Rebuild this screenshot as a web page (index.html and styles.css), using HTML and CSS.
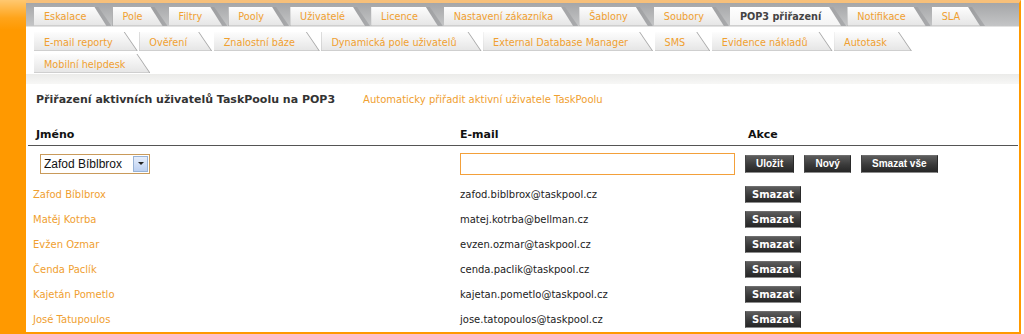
FILE: index.html
```
<!DOCTYPE html>
<html>
<head>
    <title>POP3 přiřazení</title>
    <meta charset="UTF-8">
    <meta name="viewport" content="width=device-width, initial-scale=1.0">
    <link rel="stylesheet" href="styles.css">
</head>
<body>
    <div class="page">
        <div class="side"></div>
        <div class="main">
            <!-- Záložky nastavení -->
            <ul class="tabs first">
                <li><a href="#">Eskalace</a></li>
                <li><a href="#">Pole</a></li>
                <li><a href="#">Filtry</a></li>
                <li><a href="#">Pooly</a></li>
                <li><a href="#">Uživatelé</a></li>
                <li><a href="#">Licence</a></li>
                <li><a href="#">Nastavení zákazníka</a></li>
                <li><a href="#">Šablony</a></li>
                <li><a href="#">Soubory</a></li>
                <li class="active"><a href="#">POP3 přiřazení</a></li>
                <li><a href="#">Notifikace</a></li>
                <li><a href="#">SLA</a></li>
            </ul>
            <ul class="tabs second">
                <li><a href="#">E-mail reporty</a></li>
                <li><a href="#">Ověření</a></li>
                <li><a href="#">Znalostní báze</a></li>
                <li><a href="#">Dynamická pole uživatelů</a></li>
                <li><a href="#">External Database Manager</a></li>
                <li><a href="#">SMS</a></li>
                <li><a href="#">Evidence nákladů</a></li>
                <li><a href="#">Autotask</a></li>
            </ul>
            <ul class="tabs">
                <li><a href="#">Mobilní helpdesk</a></li>
            </ul>
            <div class="band"></div>

            <div class="intro">
                <h2>Přiřazení aktivních uživatelů TaskPoolu na POP3</h2>
                <a href="#" class="link">Automaticky přiřadit aktivní uživatele TaskPoolu</a>
            </div>

            <table class="list">
                <thead>
                    <tr>
                        <th class="col-name">Jméno</th>
                        <th class="col-mail">E-mail</th>
                        <th>Akce</th>
                    </tr>
                </thead>
                <tbody>
                    <tr class="edit">
                        <td>
                            <span class="select">
                                <select name="uzivatel">
                                    <option>Zafod Bíblbrox</option>
                                </select>
                                <span class="arrow"></span>
                            </span>
                        </td>
                        <td><input type="text" name="email" class="mail"></td>
                        <td>
                            <button class="btn">Uložit</button>
                            <button class="btn">Nový</button>
                            <button class="btn">Smazat vše</button>
                        </td>
                    </tr>
                    <tr>
                        <td><a href="#">Zafod Bíblbrox</a></td>
                        <td>zafod.biblbrox@taskpool.cz</td>
                        <td><button class="btn small">Smazat</button></td>
                    </tr>
                    <tr>
                        <td><a href="#">Matěj Kotrba</a></td>
                        <td>matej.kotrba@bellman.cz</td>
                        <td><button class="btn small">Smazat</button></td>
                    </tr>
                    <tr>
                        <td><a href="#">Evžen Ozmar</a></td>
                        <td>evzen.ozmar@taskpool.cz</td>
                        <td><button class="btn small">Smazat</button></td>
                    </tr>
                    <tr>
                        <td><a href="#">Čenda Paclík</a></td>
                        <td>cenda.paclik@taskpool.cz</td>
                        <td><button class="btn small">Smazat</button></td>
                    </tr>
                    <tr>
                        <td><a href="#">Kajetán Pometlo</a></td>
                        <td>kajetan.pometlo@taskpool.cz</td>
                        <td><button class="btn small">Smazat</button></td>
                    </tr>
                    <tr>
                        <td><a href="#">José Tatupoulos</a></td>
                        <td>jose.tatopoulos@taskpool.cz</td>
                        <td><button class="btn small">Smazat</button></td>
                    </tr>
                </tbody>
            </table>
        </div>
    </div>
</body>
</html>
```
FILE: styles.css
```
body {
    font-family: "DejaVu Sans", Verdana, sans-serif;
    font-size: 10px;
    background-color: #fff;
    color: #222;
    margin: 0;
    padding: 0;
}

a {
    color: #f0a030;
    text-decoration: none;
}

.page {
    display: flex;
    height: 334px;
}

.side {
    width: 26px;
    flex-shrink: 0;
    background: linear-gradient(#ffc870 0, #ffa41a 18px, #ff9900 30px);
}

.main {
    width: 995px;
    box-sizing: border-box;
    border-top: 3px solid #f7c07a;
    border-right: 2px solid #ff9900;
    border-bottom: 2px solid #ff9900;
    background-color: #fff;
}

/* zalozky */
.tabs {
    list-style: none;
    margin: 3px 0 0 0;
    padding: 0 0 0 8px;
    display: flex;
    height: 19px;
    font-size: 9.7px;
}

.tabs.first {
    margin-top: 0;
    height: 24px;
    padding-top: 4px;
    box-sizing: border-box;
    background: linear-gradient(#a5a6a8, #c4c5c6);
    border-bottom: 1px solid #e2e2e2;
}

.tabs.second {
    margin-top: 5px;
}

.tabs li {
    margin-right: 1.5px;
    background: #a8a8a8;
    clip-path: polygon(0 0, calc(100% - 13px) 0, 100% 100%, 0 100%);
}

.tabs.first li {
    margin-right: 1px;
    background: linear-gradient(to right, #7e7f81, #a9aaac);
}

.tabs a {
    display: block;
    height: 19px;
    line-height: 19px;
    padding: 1px 25px 0 10px;
    box-sizing: border-box;
    background: linear-gradient(#fdfdfd, #e6e6e6);
    border-bottom: 1px solid #cfcfcf;
    clip-path: polygon(0 0, calc(100% - 14px) 0, calc(100% - 1px) 100%, 0 100%);
}

.tabs.first a {
    line-height: 18px;
    clip-path: polygon(0 0, calc(100% - 17px) 0, calc(100% - 5px) 100%, 0 100%);
}

.tabs .active a {
    color: #444;
    font-weight: bold;
    background: linear-gradient(#fff, #f4f4f4);
}

.band {
    height: 10px;
    margin-top: 1px;
    background: linear-gradient(#ebebe9, #f7f7f6);
}

/* nadpis */
.intro {
    display: flex;
    align-items: center;
    padding: 8px 0 0 10px;
    height: 14px;
    margin-bottom: 18px;
}

.intro h2 {
    font-size: 11px;
    margin: 0 28px 0 0;
    color: #333;
}

/* tabulka */
.list {
    border-collapse: collapse;
    margin-left: 2px;
    width: 990px;
}

.list th {
    text-align: left;
    font-size: 11px;
    font-weight: bold;
    color: #111;
    height: 21px;
    padding: 0 0 0 8px;
    border-bottom: 1px solid #555;
}

.list .col-name {
    width: 419px;
}

.list .col-mail {
    width: 280px;
    padding-left: 5px;
}

.list td {
    height: 25px;
    padding: 0 0 0 5px;
    vertical-align: middle;
}

.list .edit td {
    height: 35px;
    padding-bottom: 1px;
}

.select {
    display: inline-flex;
    margin-left: 7px;
    width: 110px;
    height: 20px;
    box-sizing: border-box;
    border: 1px solid #c99a5a;
    background-color: #fff;
}

.select select {
    appearance: none;
    -webkit-appearance: none;
    border: none;
    background: transparent;
    flex: 1;
    min-width: 0;
    padding: 0 0 0 3px;
    font-family: "Liberation Sans", Arial, sans-serif;
    font-size: 12px;
    color: #111;
    outline: none;
}

.select .arrow {
    width: 15px;
    margin: 1px;
    box-sizing: border-box;
    border: 1px solid #98b3d6;
    background: linear-gradient(#e6eefc, #bcd0f1);
    display: flex;
    align-items: center;
    justify-content: center;
}

.select .arrow::after {
    content: "";
    border-left: 3px solid transparent;
    border-right: 3px solid transparent;
    border-top: 3px solid #222;
}

.mail {
    width: 275px;
    height: 22px;
    box-sizing: border-box;
    border: 1px solid #f3a03a;
    margin: 0;
    padding: 2px;
}

.btn {
    font-family: "Liberation Sans", Arial, sans-serif;
    font-size: 10px;
    font-weight: bold;
    color: #fff;
    height: 18px;
    padding: 0 10px;
    margin: 0 7px 0 0;
    border: 1px solid;
    border-color: #6e6e6e #2a2a2a #8c8c8c #444;
    background: linear-gradient(#5c5c5c, #3a3a3a 55%, #262626);
    cursor: pointer;
}

.btn.small {
    font-family: "DejaVu Sans", Verdana, sans-serif;
    height: 17px;
    padding: 0 6px;
}
```
